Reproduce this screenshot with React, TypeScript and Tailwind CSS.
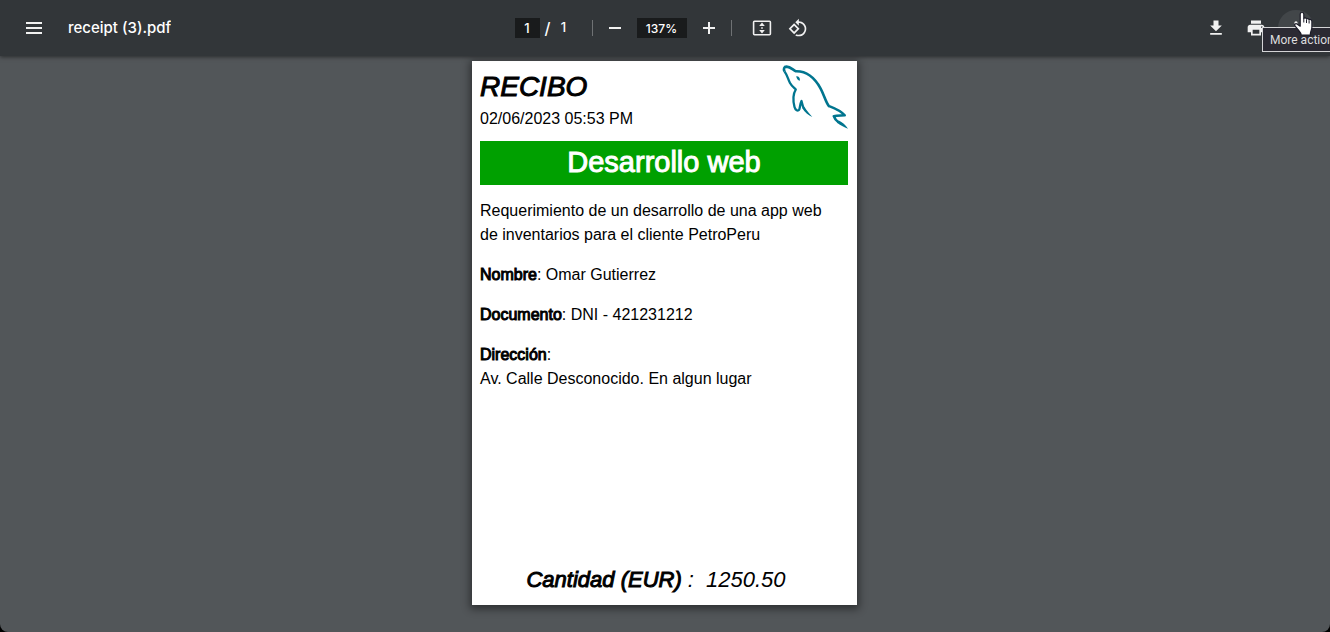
import type { ButtonHTMLAttributes, ReactNode } from "react";

type IconButtonProps = ButtonHTMLAttributes<HTMLButtonElement> & {
  label: string;
  size?: "sm" | "md";
  children: ReactNode;
};

function IconButton({ label, size = "sm", className = "", children, ...rest }: IconButtonProps) {
  const box = size === "sm" ? "size-8" : "size-9";
  return (
    <button
      type="button"
      aria-label={label}
      className={`flex shrink-0 items-center justify-center rounded-full text-[#f1f1f1] ${box} ${className}`}
      {...rest}
    >
      {children}
    </button>
  );
}

function Icon({ d }: { d: string }) {
  return (
    <svg viewBox="0 0 24 24" className="size-5" fill="currentColor" aria-hidden="true">
      <path d={d} />
    </svg>
  );
}

function Separator() {
  return <span className="h-4 w-px shrink-0 bg-[#6f7274]" />;
}

function HandPointer() {
  return (
    <svg
      viewBox="0 0 20 25"
      className="pointer-events-none absolute top-[11px] right-[17px] z-20 h-[25px] w-5"
      aria-hidden="true"
    >
      <path
        d="M7.200 3C7.200 1 10.800 1 10.800 3V7.500C11.500 6.500 13.300 6.800 13.500 8C14.300 7.200 15.900 7.500 16.100 8.800C17.200 8 18.900 8.500 18.900 10.500V16C18.900 19 17.300 20 17.300 24H8.200C8 21.500 5.500 19.500 4 17.300L1.800 14.700C1 13.200 2.700 12.200 4 13L7.200 15.200Z"
        fill="#fff"
        stroke="#1c1c28"
        strokeWidth="1.200"
        strokeLinejoin="round"
      />
      <path d="M10.800 7.500v4M13.500 8.500v3.500M16.100 9.500v3" stroke="#1c1c28" strokeWidth="1" />
    </svg>
  );
}

function Toolbar() {
  return (
    <header className="relative z-10 flex h-14 shrink-0 items-center bg-[#323639] px-4 font-['Inter',sans-serif] text-[15px] font-medium text-white shadow-[0_1px_4px_rgba(0,0,0,0.5)]">
      <div className="flex min-w-0 flex-1 items-center gap-4">
        <IconButton label="Menu" size="md">
          <svg viewBox="0 0 16 14" className="h-3.5 w-4" fill="currentColor" aria-hidden="true">
            <path d="M0 1h16v2H0zM0 6h16v2H0zM0 11h16v2H0z" />
          </svg>
        </IconButton>
        <h1 className="truncate">receipt (3).pdf</h1>
      </div>

      <div className="flex shrink-0 items-center pr-0.5">
        <div className="flex items-center text-[13px]">
          <input
            aria-label="Page number"
            defaultValue="1"
            className="h-5 w-[25px] bg-[#191b1c] text-center outline-none"
          />
          <span className="w-4 text-center text-base">/</span>
          <span className="w-4 text-center">1</span>
        </div>
        <div className="ml-5 flex items-center gap-1.5">
          <Separator />
          <IconButton label="Zoom out">
            <svg viewBox="0 0 12 12" className="size-3" fill="currentColor" aria-hidden="true">
              <path d="M0 5h12v2H0z" />
            </svg>
          </IconButton>
          <input
            aria-label="Zoom level"
            defaultValue="137%"
            className="h-5 w-[50px] bg-[#191b1c] text-center text-xs outline-none"
          />
          <IconButton label="Zoom in">
            <svg viewBox="0 0 12 12" className="size-3" fill="currentColor" aria-hidden="true">
              <path d="M0 5h5V0h2v5h5v2H7v5H5V7H0z" />
            </svg>
          </IconButton>
          <Separator />
        </div>
        <div className="ml-3.5 flex items-center gap-1">
          <IconButton label="Fit to page">
            <svg viewBox="0 0 20 16" className="h-4 w-5" fill="currentColor" aria-hidden="true">
              <path
                fillRule="evenodd"
                d="M2.500.5h15a1.700 1.700 0 0 1 1.700 1.700v11.600a1.700 1.700 0 0 1-1.700 1.700h-15A1.700 1.700 0 0 1 .8 13.800V2.200A1.700 1.700 0 0 1 2.500.5zM2.400 2.100v11.800h15.200V2.100z"
              />
              <path d="M10 2.500l2.800 3.500H7.200zM10 13.500l2.800-3.500H7.200zM9.200 7.200h1.600v1.600H9.200z" />
            </svg>
          </IconButton>
          <IconButton label="Rotate counterclockwise">
            <Icon d="M7.340 6.410L.86 12.900l6.490 6.480 6.490-6.480-6.500-6.490zM3.690 12.900l3.660-3.660L11 12.900l-3.660 3.660-3.650-3.660zm15.670-6.260C17.610 4.880 15.300 4 13 4V.76L8.760 5 13 9.240V6c1.790 0 3.580.68 4.950 2.050 2.730 2.730 2.730 7.170 0 9.900C16.580 19.320 14.790 20 13 20c-.97 0-1.940-.21-2.840-.61l-1.490 1.490C10.020 21.620 11.510 22 13 22c2.300 0 4.610-.88 6.360-2.640 3.520-3.510 3.520-9.210 0-12.720z" />
          </IconButton>
        </div>
      </div>

      <div className="flex flex-1 items-center justify-end gap-1">
        <IconButton label="Download" size="md">
          <Icon d="M5 20h14v-2H5v2zM19 9h-4V3H9v6H5l7 7 7-7z" />
        </IconButton>
        <IconButton label="Print" size="md">
          <Icon d="M19 8H5c-1.660 0-3 1.340-3 3v6h4v4h12v-4h4v-6c0-1.660-1.340-3-3-3zm-3 11H8v-5h8v5zm3-7c-.55 0-1-.45-1-1s.45-1 1-1 1 .45 1 1-.45 1-1 1zm-1-9H6v4h12V3z" />
        </IconButton>
        <IconButton
          label="More actions"
          size="md"
          className="bg-[#424649]"
          aria-describedby="more-actions-tip"
        >
          <Icon d="M12 8a2 2 0 1 0 0-4 2 2 0 0 0 0 4zm0 2a2 2 0 1 0 0 4 2 2 0 0 0 0-4zm0 6a2 2 0 1 0 0 4 2 2 0 0 0 0-4z" />
        </IconButton>
      </div>

      <div className="pointer-events-none absolute top-[27px] right-0 h-[25px] w-[68px] overflow-hidden">
        <div
          id="more-actions-tip"
          role="tooltip"
          className="flex h-full w-[86px] items-center border border-[#d4d4d6] bg-[#2b2a33] pl-[7px] font-['Roboto',sans-serif] text-xs font-normal whitespace-nowrap text-[#dcdcde]"
        >
          More actions
        </div>
      </div>
      <HandPointer />
    </header>
  );
}

function DolphinLogo() {
  return (
    <svg
      viewBox="0 0 66 64"
      className="h-16 w-[66px] shrink-0"
      fill="none"
      stroke="#00758f"
      strokeLinejoin="round"
      role="img"
      aria-label="Dolphin"
    >
      <path
        strokeWidth="2.600"
        d="M2.500 6.500C1.300 4 2 1.600 4.500 1.600C8.500 1.800 10.500 4.500 14 6.300C25.500 6 33 13.500 38.500 23.300C42 29.500 43.500 36.500 46.800 41C51.500 42.800 58 45 62.700 50.300C59 50.600 55 50.300 51.800 51.200C52.500 53.500 54 55.500 56.500 57.300"
      />
      <path
        strokeWidth="2.300"
        d="M2.500 6.300C5.500 10.500 5.800 14 8 18C10 21.500 12 22.800 13.800 24.500C11 29 11 36 12.500 42C13.300 45 16 46.800 17.300 44.500C18.200 41.500 18.200 38.500 19.500 36C20.200 38.500 20.500 40.500 21.500 43"
      />
      <path
        fill="#00758f"
        stroke="none"
        d="M20.300 43.200L22.400 41.800C24.500 45.500 27.500 48.800 30.300 52C26.500 50.500 22.500 47 20.300 43.200zM55 57.700L56.800 55.600C60.300 57.300 63.500 60 66 63.800C62 62.200 58 60 55 57.700zM14.200 11.200C16.800 11 18.200 12.600 17.900 15.800C15.800 15.300 14.500 13.500 14.200 11.200z"
      />
    </svg>
  );
}

function Label({ children }: { children: ReactNode }) {
  return <span className="[-webkit-text-stroke:1px_currentColor]">{children}</span>;
}

function Receipt() {
  return (
    <article className="flex min-h-[544px] w-[385px] flex-col bg-white pt-1 pr-[9px] pb-[7px] pl-2 font-['Liberation_Sans',Arial,sans-serif] text-base leading-6 text-black shadow-[0_2px_8px_2px_rgba(0,0,0,0.45)]">
      <div className="flex items-start justify-between">
        <div>
          <h2 className="pt-1 text-[28px] leading-9 italic">
            <Label>RECIBO</Label>
          </h2>
          <p className="mt-0.5">02/06/2023 05:53 PM</p>
        </div>
        <DolphinLogo />
      </div>
      <h3 className="mt-2.5 h-11 bg-[#00a000] text-center text-[29px] leading-[42px] text-white">
        <Label>Desarrollo web</Label>
      </h3>
      <div className="mt-3.5 space-y-4">
        <p>
          Requerimiento de un desarrollo de una app web
          <br />
          de inventarios para el cliente PetroPeru
        </p>
        <p>
          <Label>Nombre</Label>: Omar Gutierrez
        </p>
        <p>
          <Label>Documento</Label>: DNI - 421231212
        </p>
        <p>
          <Label>Dirección</Label>:
          <br />
          Av. Calle Desconocido. En algun lugar
        </p>
      </div>
      <p className="mt-auto flex justify-center gap-3 pr-4 text-[22px] leading-9 italic">
        <span>
          <Label>Cantidad (EUR)</Label> :
        </span>
        <span>1250.50</span>
      </p>
    </article>
  );
}

export default function App() {
  return (
    <div className="min-h-screen bg-black">
      <div className="flex min-h-screen flex-col overflow-hidden rounded-b-lg bg-[#525659]">
        <Toolbar />
        <main className="flex flex-1 items-start justify-center pt-[5px] pr-px pb-6">
          <Receipt />
        </main>
      </div>
    </div>
  );
}
